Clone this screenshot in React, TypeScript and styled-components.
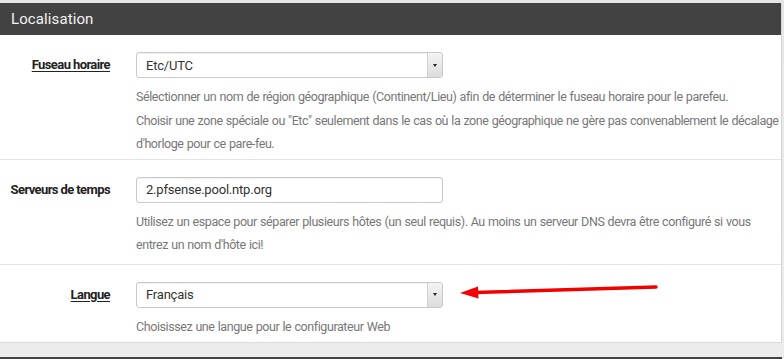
import React from "react";
import styled, { createGlobalStyle } from "styled-components";

const GlobalStyle = createGlobalStyle`
  html, body { margin: 0; padding: 0; background: #e9e9e9; }
  body { font-family: Roboto, "Liberation Sans", sans-serif; overflow: hidden; }
  * { box-sizing: border-box; }
`;

const Page = styled.div`
  width: 784px;
  height: 359px;
  padding-top: 3px;
  background: linear-gradient(#e6e6e6, #ececec);
  position: relative;
  overflow: hidden;
`;

const Panel = styled.section`
  width: 782px;
  background: #fff;
  border-right: 1px solid #d6d6d6;
  border-bottom: 1px solid #dcdcdc;
  margin-bottom: 14px;
`;

const PanelHeader = styled.h2`
  margin: 0;
  height: 32px;
  background: #424242;
  color: #f2f2f2;
  font-family: Roboto, sans-serif;
  font-weight: 400;
  font-size: 15px;
  letter-spacing: 0.1px;
  line-height: 32px;
  padding-left: 11px;
`;

const NextHeader = styled.div`
  width: 782px;
  height: 10px;
  background: #424242;
`;

const Row = styled.div<{ $pb: number }>`
  display: grid;
  grid-template-columns: 136px 1fr;
  padding: 17px 0 ${(p) => p.$pb}px;
  border-top: 1px solid #e3e3e3;
  &:first-of-type { border-top: none; }
`;

const Label = styled.span<{ $u?: boolean }>`
  justify-self: end;
  padding-right: 26px;
  height: 26px;
  line-height: 26px;
  font-size: 13px;
  font-weight: 700;
  color: #222;
  letter-spacing: -0.6px;
  text-decoration: ${(p) => (p.$u ? "underline" : "none")};
  text-underline-offset: 2px;
`;

const Field = styled.div`
  display: flex;
  flex-direction: column;
`;

const Box = styled.div`
  width: 307px;
  height: 26px;
  border: 1px solid #c8c8c8;
  border-radius: 3px;
  box-shadow: inset 0 1px 1px rgba(0, 0, 0, 0.06);
  display: flex;
  align-items: center;
  font-size: 13px;
  color: #333;
  letter-spacing: -0.2px;
  overflow: hidden;
`;

const BoxText = styled.span`
  flex: 1;
  padding-left: 9px;
`;

const Caret = styled.span`
  width: 15px;
  height: 100%;
  border-left: 1px solid #d0d0d0;
  background: linear-gradient(#f4f4f4, #dcdcdc);
  display: flex;
  align-items: center;
  justify-content: center;
  &::after {
    content: "";
    border-left: 2.5px solid transparent;
    border-right: 2.5px solid transparent;
    border-top: 3px solid #222;
  }
`;

const Help = styled.div`
  margin-top: 7px;
  font-size: 12.5px;
  line-height: 23.5px;
  color: #777;
  letter-spacing: -0.42px;
  word-spacing: 0.5px;
`;

const HelpLine = styled.span`
  display: block;
  white-space: nowrap;
`;

const Arrow = styled.svg`
  position: absolute;
  left: 458px;
  top: 283px;
`;

export default function App() {
  return (
    <>
      <GlobalStyle />
      <Page>
        <Panel>
          <PanelHeader>Localisation</PanelHeader>
          <Row $pb={3}>
            <Label $u>Fuseau horaire</Label>
            <Field>
              <Box>
                <BoxText>Etc/UTC</BoxText>
                <Caret />
              </Box>
              <Help>
                <HelpLine>Sélectionner un nom de région géographique (Continent/Lieu) afin de déterminer le fuseau horaire pour le parefeu.</HelpLine>
                <HelpLine>Choisir une zone spéciale ou "Etc" seulement dans le cas où la zone géographique ne gère pas convenablement le décalage</HelpLine>
                <HelpLine>d'horloge pour ce pare-feu.</HelpLine>
              </Help>
            </Field>
          </Row>
          <Row $pb={7}>
            <Label>Serveurs de temps</Label>
            <Field>
              <Box>
                <BoxText>2.pfsense.pool.ntp.org</BoxText>
              </Box>
              <Help>
                <HelpLine>Utilisez un espace pour séparer plusieurs hôtes (un seul requis). Au moins un serveur DNS devra être configuré si vous</HelpLine>
                <HelpLine>entrez un nom d'hôte ici!</HelpLine>
              </Help>
            </Field>
          </Row>
          <Row $pb={4}>
            <Label $u>Langue</Label>
            <Field>
              <Box>
                <BoxText>Français</BoxText>
                <Caret />
              </Box>
              <Help>
                <HelpLine>Choisissez une langue pour le configurateur Web</HelpLine>
              </Help>
            </Field>
          </Row>
        </Panel>
        <NextHeader />
        <Arrow width="204" height="16" viewBox="0 0 204 16">
          <path d="M198 4 L16 9.5" stroke="#f20000" strokeWidth="3.5" strokeLinecap="round" fill="none" />
          <path d="M2 10 L20 3.5 L20.5 15.5 Z" fill="#f20000" />
        </Arrow>
      </Page>
    </>
  );
}
